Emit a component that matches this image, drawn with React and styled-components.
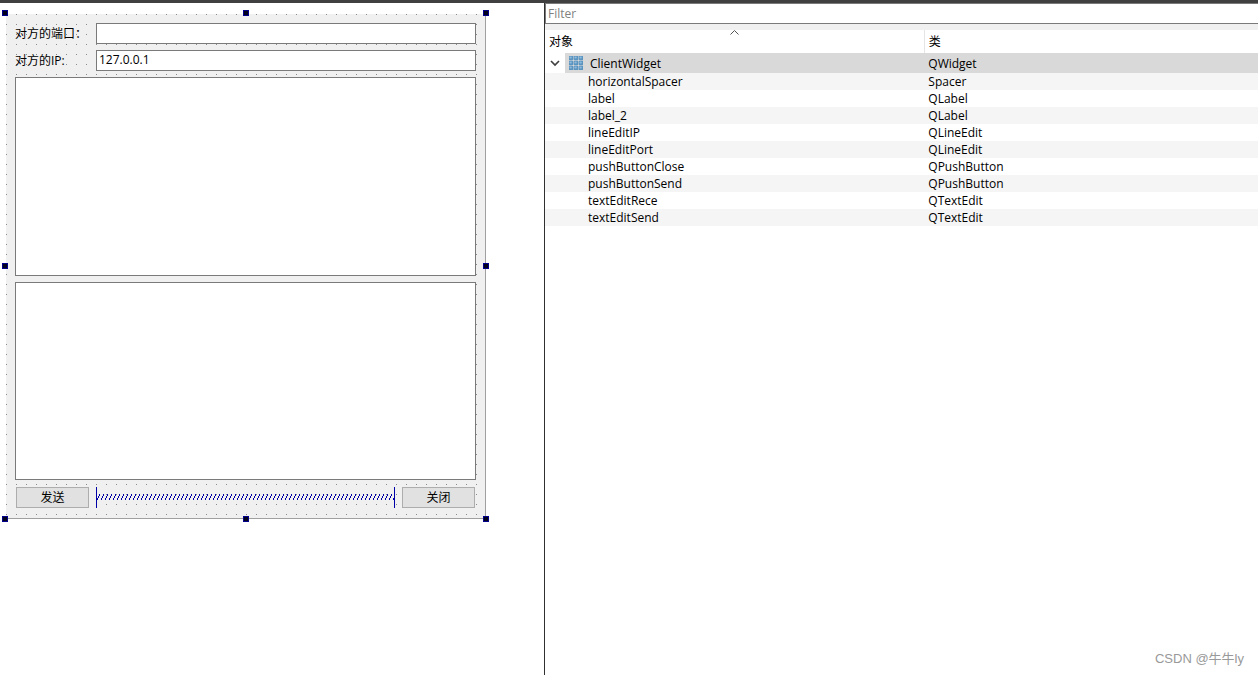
import React from 'react';
import styled, { createGlobalStyle } from 'styled-components';

const objects = [
    { name: 'horizontalSpacer', type: 'Spacer' },
    { name: 'label', type: 'QLabel' },
    { name: 'label_2', type: 'QLabel' },
    { name: 'lineEditIP', type: 'QLineEdit' },
    { name: 'lineEditPort', type: 'QLineEdit' },
    { name: 'pushButtonClose', type: 'QPushButton' },
    { name: 'pushButtonSend', type: 'QPushButton' },
    { name: 'textEditRece', type: 'QTextEdit' },
    { name: 'textEditSend', type: 'QTextEdit' },
];

const handles = [
    ['0%', '0%'], ['50%', '0%'], ['100%', '0%'],
    ['0%', '50%'], ['100%', '50%'],
    ['0%', '100%'], ['50%', '100%'], ['100%', '100%'],
];

function App(){
    return(
        <Window>
            <GlobalStyle />
            <Canvas>
                <Form onSubmit={e => e.preventDefault()}>
                    <Field>
                        <Label htmlFor="port">对方的端口：</Label>
                        <LineEdit id="port" />
                    </Field>
                    <Field>
                        <Label htmlFor="ip">对方的IP:</Label>
                        <LineEdit id="ip" defaultValue="127.0.0.1" />
                    </Field>
                    <TextEdit aria-label="textEditRece" />
                    <TextEdit aria-label="textEditSend" />
                    <Actions>
                        <PushButton type="submit">发送</PushButton>
                        <Spacer />
                        <PushButton type="button">关闭</PushButton>
                    </Actions>
                    <Selection>
                        {handles.map(([x, y]) => <Handle key={x + y} $x={x} $y={y} />)}
                    </Selection>
                </Form>
            </Canvas>
            <Inspector>
                <Filter placeholder="Filter" aria-label="Filter" />
                <Tree>
                    <thead>
                        <tr>
                            <Head $wide>对象<SortArrow /></Head>
                            <Head>类</Head>
                        </tr>
                    </thead>
                    <tbody>
                        <RootRow>
                            <td>
                                <RootCell>
                                    <Toggle type="button" aria-label="ClientWidget">
                                        <Chevron />
                                    </Toggle>
                                    <RootName><GridIcon />ClientWidget</RootName>
                                </RootCell>
                            </td>
                            <TypeCell>QWidget</TypeCell>
                        </RootRow>
                        {objects.map(o => (
                            <Row key={o.name}>
                                <NameCell>{o.name}</NameCell>
                                <TypeCell>{o.type}</TypeCell>
                            </Row>
                        ))}
                    </tbody>
                </Tree>
                <Watermark>CSDN @牛牛ly</Watermark>
            </Inspector>
        </Window>
    )
}

function Spacer(){
    return(
        <SpacerLine aria-hidden="true">
            <svg width="100%" height="7">
                <defs>
                    <pattern id="spring" width="4" height="7" patternUnits="userSpaceOnUse">
                        <path d="M0 4h1v2h-1zM1 2h1v2h-1zM2 0h1v2h-1z" fill="#0000a8" shapeRendering="crispEdges" />
                    </pattern>
                </defs>
                <rect width="100%" height="7" fill="url(#spring)" />
            </svg>
        </SpacerLine>
    )
}

function SortArrow(){
    return(
        <Arrow width="9" height="5" viewBox="0 0 9 5" aria-hidden="true">
            <path d="M.5 4.5l4-4 4 4" fill="none" stroke="#555" />
        </Arrow>
    )
}

function Chevron(){
    return(
        <svg width="10" height="7" viewBox="0 0 10 7" aria-hidden="true">
            <path d="M1 1l4 4 4-4" fill="none" stroke="#404040" strokeWidth="1.7" />
        </svg>
    )
}

function GridIcon(){
    return(
        <svg width="14" height="14" viewBox="0 0 14 14" aria-hidden="true">
            {[0, 5, 10].map(y => [0, 5, 10].map(x => (
                <g key={x + '-' + y}>
                    <rect x={x - 0.3} y={y - 0.3} width="4.6" height="4.6" rx="1" fill="#5c94c0" />
                    <rect x={x + 0.4} y={y + 0.4} width="2.4" height="2" rx="1" fill="#8dbadd" />
                </g>
            )))}
        </svg>
    )
}

const GlobalStyle = createGlobalStyle`
    body{
        margin: 0;
        background: white;
    }
    *{
        box-sizing: border-box;
    }
    body, input, textarea, button{
        font-family: 'Open Sans', 'Noto Sans CJK SC', sans-serif;
        font-size: 12px;
        color: black;
    }
`;

const Window = styled.div`
    display: grid;
    grid-template-columns: 545fr 713fr;
    min-height: 100vh;
    border-top: 3px solid #404040;
`;

const Canvas = styled.main`
    padding: 11px 58px 0 6px;
    border-right: 1px solid #303030;
`;

const Form = styled.form`
    position: relative;
    display: flex;
    flex-direction: column;
    gap: 6px;
    height: calc(100vh - 170px);
    min-height: 300px;
    padding: 9px;
    border: solid #a0a0a0;
    border-width: 0 1px 1px 0;
    background: conic-gradient(from 270deg at 1px 1px, #8c8c8c 90deg, #f0f0f0 90deg) 0 0 / 10px 10px;
`;

const Field = styled.div`
    display: flex;
    height: 21px;
`;

const Label = styled.label`
    flex: none;
    width: 72px;
    margin-right: 9px;
    line-height: 21px;
    white-space: nowrap;
`;

const LineEdit = styled.input`
    flex: 1;
    min-width: 0;
    padding: 0 2px 2px;
    border: 1px solid #7a7a7a;
    background: white;
`;

const TextEdit = styled.textarea`
    flex: 1;
    min-height: 0;
    margin: 0;
    border: 1px solid #7a7a7a;
    background: white;
    resize: none;
`;

const Actions = styled.div`
    display: flex;
    gap: 7px;
    padding: 1px;
`;

const PushButton = styled.button`
    flex: none;
    width: 73px;
    height: 21px;
    padding: 0;
    border: 1px solid #adadad;
    background: #e1e1e1;
    line-height: 19px;
`;

const SpacerLine = styled.div`
    flex: 1;
    display: flex;
    align-items: center;
    border: solid #0000a8;
    border-width: 0 1px;
`;

const Selection = styled.div`
    position: absolute;
    inset: 0 -2px -2px 0;
    pointer-events: none;
`;

const Handle = styled.span`
    position: absolute;
    left: ${props => props.$x};
    top: ${props => props.$y};
    width: 6px;
    height: 6px;
    margin: -4px 0 0 -4px;
    border: 1px solid #00008b;
    background: #00001c;
`;

const Inspector = styled.aside`
    position: relative;
    display: flex;
    flex-direction: column;
`;

const Filter = styled.input`
    height: 21px;
    padding: 0 2px;
    border: 1px solid #7a7a7a;
    border-right: 0;
    background: white;
    &::placeholder{
        color: #808080;
    }
`;

const Tree = styled.table`
    width: 100%;
    table-layout: fixed;
    border-collapse: collapse;
    border-top: 6px solid #f0f0f0;
    line-height: 17px;
    td{
        padding: 0;
    }
`;

const Head = styled.th`
    position: relative;
    width: ${props => props.$wide ? '53.2%' : 'auto'};
    height: 26px;
    padding: 0 4px;
    border-right: ${props => props.$wide ? '1px solid #e5e5e5' : '0'};
    font-weight: normal;
    text-align: left;
`;

const Arrow = styled.svg`
    position: absolute;
    top: 0;
    left: 50%;
    margin-left: -4px;
`;

const RootRow = styled.tr`
    height: 20px;
    background: #d9d9d9;
`;

const RootCell = styled.div`
    display: flex;
    height: 20px;
`;

const Toggle = styled.button`
    display: flex;
    align-items: center;
    justify-content: center;
    width: 20px;
    padding: 0;
    border: 0;
    background: white;
`;

const RootName = styled.span`
    display: flex;
    align-items: center;
    gap: 7px;
    padding-left: 4px;
`;

const Row = styled.tr`
    height: 17px;
    &:nth-child(even){
        background: #f5f5f5;
    }
`;

const NameCell = styled.td`
    && {
        padding-left: 43px;
    }
`;

const TypeCell = styled.td`
    && {
        padding-left: 4px;
    }
`;

const Watermark = styled.div`
    position: absolute;
    right: 14px;
    bottom: 7px;
    font-family: 'Liberation Sans', 'Noto Sans CJK SC', sans-serif;
    font-size: 13px;
    line-height: 18px;
    color: #999;
`;

export default App;
